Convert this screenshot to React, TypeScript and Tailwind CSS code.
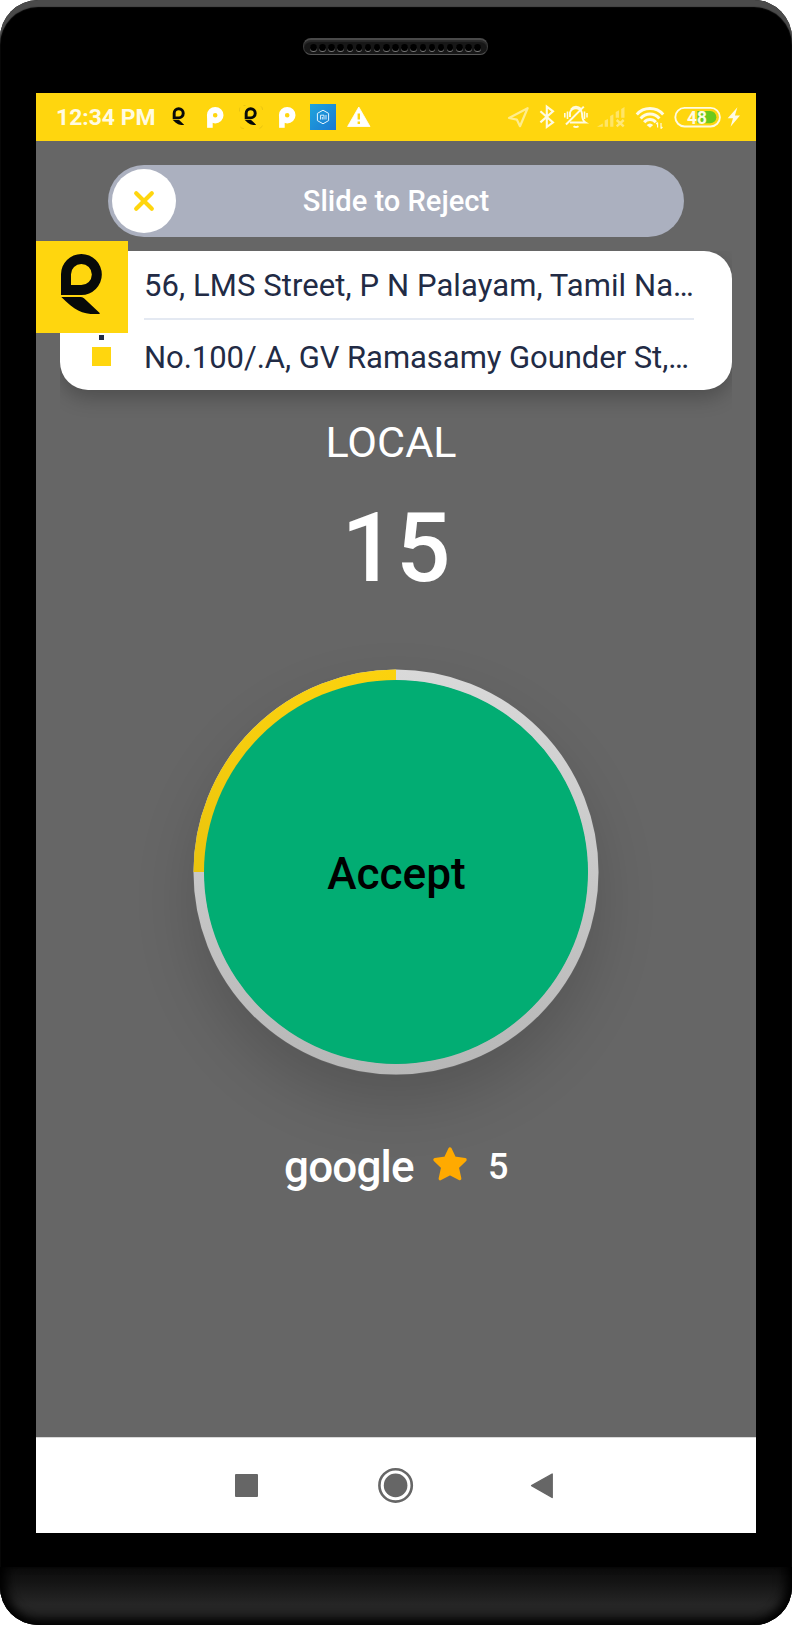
import React from "react";

const YELLOW = "#ffd60e";
const STATUS = "#fffbe2";

/* One cell of the 720x48 status bar; glyphs are drawn in bar coordinates. */
function Cell({ from, to, children }: { from: number; to: number; children?: React.ReactNode }) {
  return (
    <svg width={to - from} height={48} viewBox={`${from} 0 ${to - from} 48`} className="block shrink-0">
      {children}
    </svg>
  );
}

/* Brand mark, 122 x 181 units. */
function Mark() {
  return (
    <g fill="#070a09">
      <path
        fillRule="evenodd"
        d="M61 0A61.5 61.5 0 0 1 61 123H0V61A61 61 0 0 1 61 0ZM61 30A31 31 0 0 0 30 61V93H61A31.5 31.5 0 0 0 61 30Z"
      />
      <path d="M1 129H58Q64 129 69 133L116 177Q118 180 114 180C66 182 44 172 1 129Z" />
    </g>
  );
}

function ParkingGlyph({ x }: { x: number }) {
  return (
    <g transform={`translate(${x} 14)`} fill="none" stroke="#fff">
      <circle cx="8.2" cy="8.2" r="5.3" strokeWidth="6" />
      <path d="M2.9 8.2V20.8" strokeWidth="5.6" />
    </g>
  );
}

function StatusBar() {
  return (
    <div className="flex h-12 items-center bg-[#ffd60e]">
      <div className="w-[126px] shrink-0 whitespace-nowrap pl-[20px] pt-[2px] text-[22.9px] leading-[48px] font-bold text-[#fffbe2]">
        12:34 PM
      </div>
      <Cell from={126} to={160}>
        <g transform="translate(136.7 14.3) scale(.098)"><Mark /></g>
      </Cell>
      <Cell from={160} to={198}><ParkingGlyph x={171} /></Cell>
      <Cell from={198} to={234}>
        <rect x="203.5" y="12.5" width="23" height="23" rx="4" fill="none" stroke="#e0bd10" strokeWidth=".7" strokeDasharray="4 15.6" strokeDashoffset="2" />
        <g transform="translate(208.7 14.3) scale(.098)"><Mark /></g>
      </Cell>
      <Cell from={234} to={270}><ParkingGlyph x={243} /></Cell>
      <Cell from={270} to={304}>
        <defs>
          <linearGradient id="mi" x1="0" y1="0" x2="1" y2="1">
            <stop offset="0" stopColor="#1fa5dc" />
            <stop offset="1" stopColor="#1b78d3" />
          </linearGradient>
        </defs>
        <rect x="274" y="11" width="26" height="26" fill="url(#mi)" />
        <g fill="none" stroke="#e6f6ff" strokeWidth="1">
          <path d="M287 17.2L292.6 20.4V27.6L287 30.8L281.4 27.6V20.4Z" />
          <path d="M284.5 26.5V22.2H288V26.5M286.3 24V26.5M290 22V26.5" strokeWidth=".9" />
        </g>
      </Cell>
      <Cell from={304} to={346}>
        <path d="M322.8 14L334 33.5H311.6Z" fill="#fff" stroke="#fff" strokeLinejoin="round" strokeWidth=".8" />
        <path d="M322.8 20.5V26.5M322.8 28.5V31" stroke={YELLOW} strokeWidth="2.4" />
      </Cell>
      <div className="grow" />
      <Cell from={466} to={498}>
        <path d="M491.6 15.2L473 25L480.8 26.6L484 33.2Z" fill="none" stroke={STATUS} strokeWidth="2.2" strokeLinejoin="round" opacity=".6" />
      </Cell>
      <Cell from={498} to={523}>
        <path d="M504.4 18.3L517 29.4L510.8 34V13.6L517 18.3L504.4 29.4" fill="none" stroke={STATUS} strokeWidth="2.1" />
      </Cell>
      <Cell from={523} to={557}>
        <g fill="none" stroke={STATUS} strokeWidth="1.9">
          <path d="M534 29.5H549.5Q546 27.5 546 20.5A6.2 6.2 0 0 0 534 19.5V24" />
          <path d="M535 16.5Q537 13.8 540 13.8Q543 13.8 545 16" />
          <path d="M530 31.5L547.8 13.6" strokeWidth="2" />
          <path d="M537.5 33.2Q540 35 542.5 33.2" strokeWidth="2" />
          <path d="M531.5 18.5V26M528.8 20V24.5M548.5 18.5V26M551 20V24.5" strokeWidth="1.6" />
        </g>
      </Cell>
      <Cell from={557} to={594}>
        <g fill={STATUS} opacity=".42">
          <path d="M561 33.7L566.8 30.5V33.7ZM568.7 27.5L572 26V33.7H568.7ZM574.2 23L577.4 21.2V33.7H574.2ZM579.7 19L583 17.2V24.7H579.7ZM585.2 16L588.5 14V24.7H585.2Z" />
        </g>
        <path d="M580.7 27L587.7 33.3M587.7 27L580.7 33.3" stroke={STATUS} strokeWidth="2.4" opacity=".5" />
      </Cell>
      <Cell from={594} to={634}>
        <g fill="none" stroke={STATUS} strokeWidth="3">
          <path d="M600.8 21.4Q606 15.5 614 15.5Q622 15.5 627.2 21.4" />
          <path d="M604.6 25.4Q608.5 20.9 614 20.9Q619.5 20.9 623.4 25.4" />
          <path d="M608.2 29.2Q610.6 26.4 614 26.4Q617.4 26.4 619.8 29.2" />
        </g>
        <path d="M610.6 32.1Q614 28.9 617.2 32.1L614 34.8Z" fill={STATUS} />
        <path d="M621.6 29.5V34.5M620.2 31L621.6 29.5M625 30V35.8M626.4 34L625 35.6" stroke={STATUS} strokeWidth="1.2" fill="none" />
      </Cell>
      <Cell from={634} to={688}>
        <rect x="639.3" y="14.9" width="44.6" height="18.6" rx="9.3" fill="none" stroke={STATUS} strokeWidth="1.9" />
        <path d="M661.3 18H674.2A6.1 6.1 0 0 1 674.2 30.3H661.3Z" fill="#6cc91d" />
        <text x="651" y="30.5" fontSize="19" fontWeight="700" textLength="19.8" lengthAdjust="spacingAndGlyphs" fill={STATUS}>48</text>
      </Cell>
      <Cell from={688} to={720}>
        <path d="M701.4 14.3L691.7 25.2H697L694.5 33.8L704 22.6H698.9Z" fill={STATUS} />
      </Cell>
    </div>
  );
}

function Speaker() {
  return (
    <div className="ml-[303px] flex h-[17px] w-[185px] items-center justify-between rounded-[8px] border-x border-t-2 border-b border-x-[#3a3a3a] border-t-[#494949] border-b-[#555] bg-[#171717] px-[6px] shadow-[inset_0_2px_1px_#2a2a2a]">
      {Array.from({ length: 19 }, (_, i) => (
        <span key={i} className="mt-px h-[7.5px] w-[6.6px] rounded-full bg-black shadow-[0_1px_0_#7a7a7a]" />
      ))}
    </div>
  );
}

function SlideToReject() {
  return (
    <div className="mx-auto flex h-[72px] w-[576px] items-center rounded-full bg-[#abb0bf] pl-1 pr-[68px]">
      <div className="flex size-16 shrink-0 items-center justify-center rounded-full bg-white">
        <svg width="22" height="22" viewBox="0 0 22 22">
          <path d="M3.2 3.2L18.8 18.8M18.8 3.2L3.2 18.8" stroke={YELLOW} strokeWidth="4.2" strokeLinecap="round" />
        </svg>
      </div>
      <div className="grow text-center text-[29.1px] leading-[70px] font-medium text-white">Slide to Reject</div>
    </div>
  );
}

function RouteCard() {
  return (
    <div className="mx-6 mt-[14px] -mb-10 h-[179px] overflow-hidden">
      <div className="flex h-[139px] rounded-[28px] bg-white shadow-[0_8px_20px_rgba(0,0,0,0.24)]">
        <div className="flex w-[84px] shrink-0 flex-col items-center pr-[1px] pt-[84px]">
          <div className="size-[5px] bg-[#222b45]" />
          <div className="mt-[7px] size-[19px] bg-[#ffd60e]" />
        </div>
        <div className="w-[550px] text-[31px] whitespace-nowrap text-[#222b45]">
          <div className="h-[67px] leading-[69px] tracking-[0.09px]">56, LMS Street, P N Palayam, Tamil Na…</div>
          <div className="h-[2px] bg-[#e4e9f2]" />
          <div className="h-[70px] leading-[75px] tracking-[-0.05px]">No.100/.A, GV Ramasamy Gounder St,…</div>
        </div>
      </div>
    </div>
  );
}

function AcceptDial() {
  return (
    <div className="mx-auto mt-[65px] flex size-[406px] rounded-full shadow-[0_28px_60px_rgba(0,0,0,0.16)]">
      <div className="grid size-full">
        <svg viewBox="0 0 406 406" className="col-start-1 row-start-1 size-full">
          <defs>
            <linearGradient id="track" gradientUnits="userSpaceOnUse" x1="0" y1="0" x2="0" y2="406">
              <stop offset="0" stopColor="#d9d9d9" />
              <stop offset="1" stopColor="#b7b7b7" />
            </linearGradient>
            <linearGradient id="progress" gradientUnits="userSpaceOnUse" x1="0" y1="0" x2="0" y2="203">
              <stop offset="0" stopColor="#fbd20e" />
              <stop offset="1" stopColor="#eac40e" />
            </linearGradient>
          </defs>
          <circle cx="203" cy="203" r="197" fill="none" stroke="url(#track)" strokeWidth="11" />
          <path d="M6 203A197 197 0 0 1 203 6" fill="none" stroke="url(#progress)" strokeWidth="11" />
          <circle cx="203" cy="203" r="192" fill="#02ad73" />
        </svg>
        <div className="z-10 col-start-1 row-start-1 self-center pt-[4px] pl-px text-center text-[44.2px] leading-[60px] font-medium text-black">
          Accept
        </div>
      </div>
    </div>
  );
}

function Rider() {
  return (
    <div className="mt-[62px] flex h-[60px] items-center text-white">
      <div className="w-[396px] pl-[248px] text-[44px] leading-[60px] font-medium tracking-[-0.8px]">google</div>
      <svg width="36" height="36" viewBox="0 0 36 36" className="-mt-[6px] shrink-0">
        <path
          d="M18 3L22.4 12.3L33 13.8L25.2 21.4L27.7 32.6L18 27.5L8.3 32.6L10.8 21.4L3 13.8L13.6 12.3Z"
          fill="#ffaa00" stroke="#ffaa00" strokeWidth="3.4" strokeLinejoin="round"
        />
      </svg>
      <div className="pl-[20px] text-[36px] leading-[60px] font-medium">5</div>
    </div>
  );
}

function NavBar() {
  return (
    <div className="flex h-24 shrink-0 items-center border-t border-[#d9d9d9] bg-white pb-px text-[#666]">
      <svg width="420" height="40" viewBox="150 0 420 40" className="mx-auto">
        <g fill="#666">
          <rect x="199" y="9" width="23" height="23" rx="1" />
          <circle cx="359.6" cy="20.4" r="11.8" />
          <circle cx="359.6" cy="20.4" r="16.2" fill="none" stroke="#666" strokeWidth="2.6" />
          <path d="M516.2 9V32.5L495.6 20.7Z" stroke="#666" strokeWidth="1.4" strokeLinejoin="round" />
        </g>
      </svg>
    </div>
  );
}

export default function App() {
  return (
    <div className="h-[1625px] w-[792px] bg-white font-['Roboto',sans-serif]">
      <div className="flex h-full flex-col rounded-[38px] bg-black shadow-[inset_0_7px_1px_#4a4a4a]">
        <div className="h-[93px] shrink-0 pt-[38px]">
          <Speaker />
        </div>
        <div className="mx-auto flex h-[1440px] w-[720px] shrink-0 flex-col">
          <StatusBar />
          <div className="relative flex grow flex-col bg-[#666] pt-6">
            <SlideToReject />
            <RouteCard />
            <div className="absolute top-[100px] left-0 size-[92px] bg-[#ffd60e] pt-[13px] pl-[25px]">
              <svg width="41" height="61" viewBox="0 0 123 183"><Mark /></svg>
            </div>
            <div className="mt-[22px] h-[60px] pr-[10px] text-center text-[43.2px] leading-[62px] text-white">LOCAL</div>
            <div className="mt-5 h-28 text-center text-[96px] leading-[112px] font-medium text-white">15</div>
            <AcceptDial />
            <Rider />
          </div>
          <NavBar />
        </div>
        <div className="mt-[34px] h-[58px] rounded-b-[38px] bg-[linear-gradient(to_bottom,#0c0c0c_0%,#141414_25%,#262626_65%,#262626_100%)] shadow-[inset_12px_0_12px_-6px_#000,inset_-12px_0_12px_-6px_#000,inset_0_-9px_12px_-3px_#000]" />
      </div>
    </div>
  );
}
